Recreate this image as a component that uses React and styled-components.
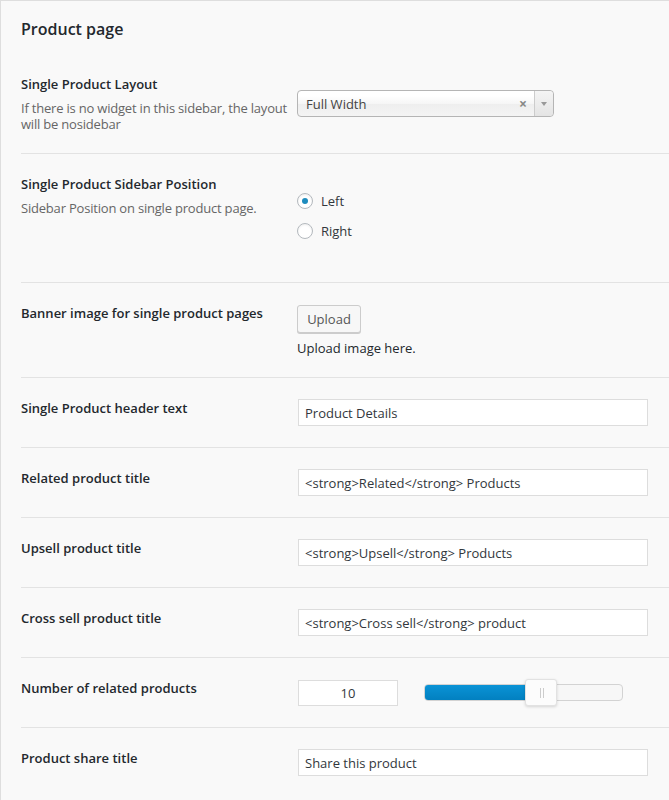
import styled, { createGlobalStyle } from "styled-components";

const GlobalStyle = createGlobalStyle`
    body {
        margin: 0;
        background: #f9f9f9;
        font-family: "Open Sans", "Liberation Sans", sans-serif;
        font-size: 13px;
        color: #23282d;
    }
`;

const textFields = [
    { label: "Single Product header text", value: "Product Details" },
    { label: "Related product title", value: "<strong>Related</strong> Products" },
    { label: "Upsell product title", value: "<strong>Upsell</strong> Products" },
    { label: "Cross sell product title", value: "<strong>Cross sell</strong> product" },
];

function App() {
    const related = 10;
    const percent = 59;

    return (
        <>
            <GlobalStyle />
            <Panel>
                <Title>Product page</Title>

                {/* LAYOUT SELECT */}
                <Row>
                    <LabelCol>
                        <Label>Single Product Layout</Label>
                        <Desc>If there is no widget in this sidebar, the layout will be nosidebar</Desc>
                    </LabelCol>
                    <Control $top={15}>
                        <Select>
                            <span className="value">Full Width</span>
                            <span className="clear">×</span>
                            <span className="arrow"><i /></span>
                        </Select>
                    </Control>
                </Row>

                {/* SIDEBAR POSITION */}
                <Row>
                    <LabelCol>
                        <Label>Single Product Sidebar Position</Label>
                        <Desc>Sidebar Position on single product page.</Desc>
                    </LabelCol>
                    <Control>
                        <RadioList>
                            <RadioItem><Radio $checked />Left</RadioItem>
                            <RadioItem><Radio />Right</RadioItem>
                        </RadioList>
                    </Control>
                </Row>

                {/* BANNER UPLOAD */}
                <Row>
                    <LabelCol>
                        <Label>Banner image for single product pages</Label>
                    </LabelCol>
                    <Control $top={1}>
                        <Button type="button">Upload</Button>
                        <Hint>Upload image here.</Hint>
                    </Control>
                </Row>

                {textFields.map((f) => (
                    <Row key={f.label}>
                        <LabelCol>
                            <Label>{f.label}</Label>
                        </LabelCol>
                        <Control>
                            <TextInput type="text" defaultValue={f.value} />
                        </Control>
                    </Row>
                ))}

                {/* RELATED COUNT */}
                <Row>
                    <LabelCol>
                        <Label>Number of related products</Label>
                    </LabelCol>
                    <Control>
                        <SliderWrap>
                            <NumberInput type="text" defaultValue={related} />
                            <Track>
                                <Fill style={{ width: `${percent}%` }} />
                                <Handle style={{ left: `${percent}%` }} />
                            </Track>
                        </SliderWrap>
                    </Control>
                </Row>

                <Row $last>
                    <LabelCol>
                        <Label>Product share title</Label>
                    </LabelCol>
                    <Control>
                        <TextInput type="text" defaultValue="Share this product" />
                    </Control>
                </Row>
            </Panel>
        </>
    );
}

const Panel = styled.div`
    min-height: 800px;
    box-sizing: border-box;
    border-top: 1px solid #dedede;
    border-left: 1px solid #dedede;
    padding-left: 20px;
    overflow: hidden;
`;

const Title = styled.h2`
    margin: 0 0 14px;
    padding-top: 17px;
    font-size: 16px;
    line-height: 22px;
    font-weight: 600;
    color: #23282d;
`;

const Row = styled.div`
    display: flex;
    padding: 21px 0;
    border-bottom: ${(p) => (p.$last ? "none" : "1px solid #e3e3e3")};
`;

const LabelCol = styled.div`
    width: 276px;
    flex: none;
`;

const Label = styled.div`
    font-weight: 600;
    line-height: 18px;
    color: #23282d;
`;

const Desc = styled.div`
    margin-top: 7px;
    line-height: 16px;
    letter-spacing: -0.2px;
    color: #666;
`;

const Control = styled.div`
    flex: 1;
    padding-top: ${(p) => p.$top || 0}px;
`;

const Select = styled.div`
    width: 257px;
    height: 27px;
    box-sizing: border-box;
    display: flex;
    align-items: center;
    border: 1px solid #b5b5b5;
    border-radius: 4px;
    background: linear-gradient(#fff 20%, #f6f6f6 50%, #eee 52%, #f4f4f4 100%);
    color: #444;
    .value {
        flex: 1;
        padding-left: 8px;
    }
    .clear {
        color: #888;
        font-weight: 700;
        font-size: 14px;
        padding-right: 7px;
    }
    .arrow {
        width: 18px;
        height: 100%;
        border-left: 1px solid #ccc;
        display: flex;
        align-items: center;
        justify-content: center;
        background: linear-gradient(#f4f4f4, #e4e4e4);
        border-radius: 0 4px 4px 0;
        i {
            width: 0;
            height: 0;
            border-left: 3px solid transparent;
            border-right: 3px solid transparent;
            border-top: 4px solid #999;
        }
    }
`;

const RadioList = styled.div`
    display: flex;
    flex-direction: column;
    gap: 10px;
    padding: 16px 0 20px;
`;

const RadioItem = styled.label`
    display: flex;
    align-items: center;
    gap: 8px;
    height: 20px;
    color: #32373c;
`;

const Radio = styled.span`
    width: 16px;
    height: 16px;
    box-sizing: border-box;
    border-radius: 50%;
    border: 1px solid #b4b9be;
    background: #fff;
    box-shadow: inset 0 1px 2px rgba(0, 0, 0, 0.07);
    display: flex;
    align-items: center;
    justify-content: center;
    &::after {
        content: "";
        width: 6px;
        height: 6px;
        border-radius: 50%;
        background: ${(p) => (p.$checked ? "#1e8cbe" : "transparent")};
    }
`;

const Button = styled.button`
    display: block;
    height: 28px;
    width: 64px;
    padding: 0;
    border: 1px solid #ccc;
    border-radius: 3px;
    background: #f7f7f7;
    box-shadow: 0 1px 0 #ccc;
    color: #555;
    font-family: inherit;
    font-size: 13px;
`;

const Hint = styled.div`
    margin-top: 7px;
    line-height: 16px;
    color: #23282d;
`;

const TextInput = styled.input`
    display: block;
    margin-left: 1px;
    width: 350px;
    height: 27px;
    box-sizing: border-box;
    padding: 0 6px;
    border: 1px solid #ddd;
    background: #fff;
    font-family: inherit;
    font-size: 13px;
    color: #32373c;
    outline: none;
`;

const SliderWrap = styled.div`
    display: flex;
    align-items: center;
    gap: 26px;
    height: 27px;
`;

const NumberInput = styled(TextInput)`
    width: 100px;
    height: 26px;
    text-align: center;
`;

const Track = styled.div`
    position: relative;
    width: 199px;
    height: 17px;
    box-sizing: border-box;
    border: 1px solid #d3d3d3;
    border-radius: 4px;
    background: #f7f7f7;
`;

const Fill = styled.div`
    height: 100%;
    border-radius: 3px 0 0 3px;
    background: linear-gradient(#0a93d6, #0280c0);
`;

const Handle = styled.span`
    position: absolute;
    top: -6px;
    width: 32px;
    height: 27px;
    margin-left: -16px;
    box-sizing: border-box;
    border: 1px solid #e2e2e2;
    border-radius: 3px;
    background: #fcfcfc;
    box-shadow: 0 1px 3px rgba(0, 0, 0, 0.15);
    &::before,
    &::after {
        content: "";
        position: absolute;
        top: 8px;
        width: 1px;
        height: 10px;
        background: #ccc;
    }
    &::before {
        left: 14px;
    }
    &::after {
        left: 17px;
    }
`;

export default App;
